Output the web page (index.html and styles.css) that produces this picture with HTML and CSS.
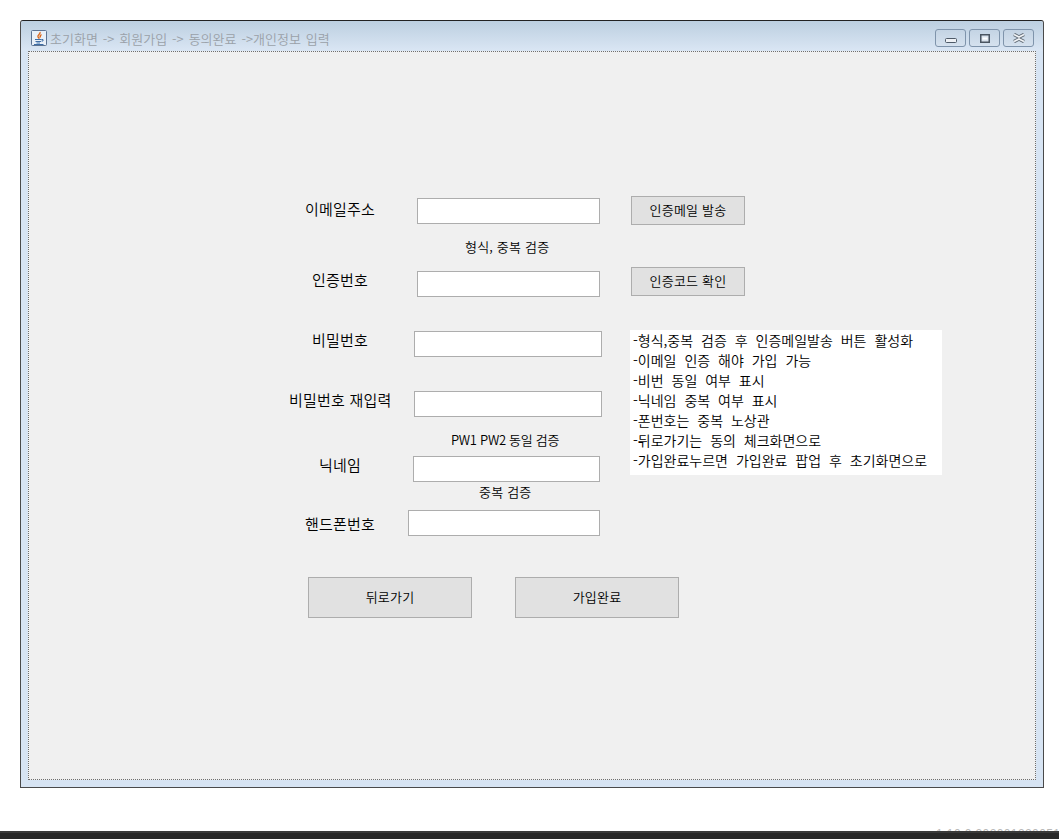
FILE: index.html
```html
<!DOCTYPE html>
<html lang="ko">
<head>
<meta charset="utf-8">
<title>개인정보 입력</title>
<link rel="stylesheet" href="styles.css">
</head>
<body>
<div class="window">
  <div class="titlebar">
    <svg class="app-icon" width="16" height="16" viewBox="0 0 16 16">
      <rect x="0.500" y="0.500" width="15" height="15" rx="1" fill="#e9f0f8" stroke="#5d7392"/>
      <path d="M9 2c1 2-3 3-2 5 .4.8 1 1 1.400 1.600M10.500 4.500c-1.500 1-2 1.500-1 3" fill="none" stroke="#dd6a1e" stroke-width="1.400"/>
      <path d="M4 9.500h6.500M4.500 11.500h5.500M5.500 13h3.500M3 14.500h9.500M10.500 9.500h1.500v1.500h-1.500" fill="none" stroke="#3f6ea6" stroke-width="1"/>
    </svg>
    <span class="title">초기화면 -&gt; 회원가입 -&gt; 동의완료 -&gt;개인정보 입력</span>
    <div class="win-buttons">
      <div class="win-btn wide">
        <svg width="12" height="5" viewBox="0 0 12 5"><rect x="0.500" y="0.500" width="11" height="4" rx="1" fill="#eef1f5" stroke="#4e5a68"/></svg>
      </div>
      <div class="win-btn">
        <svg width="10" height="9" viewBox="0 0 10 9"><rect x="0.750" y="0.750" width="8.500" height="7.500" fill="#d9e2ec" stroke="#4a5561" stroke-width="1.500"/><rect x="2.500" y="3.500" width="5" height="2" fill="#fff"/></svg>
      </div>
      <div class="win-btn">
        <svg width="14" height="10" viewBox="0 0 14 10"><path d="M2 1.500L7 4 12 1.500M2 8.500L7 6l5 2.500" fill="none" stroke="#5e6873" stroke-width="3.600"/><path d="M2 1.500L7 4 12 1.500M2 8.500L7 6l5 2.500" fill="none" stroke="#f0f3f6" stroke-width="1.800"/></svg>
      </div>
    </div>
  </div>
  <div class="content">
    <div class="form">
      <div class="fields">
        <div class="row row-email">
          <label class="label label-email">이메일주소</label>
          <input class="field field-email" type="text">
        </div>
        <p class="hint hint-email">형식, 중복 검증</p>
        <div class="row row-code">
          <label class="label label-code">인증번호</label>
          <input class="field field-code" type="text">
        </div>
        <div class="row row-pw">
          <label class="label label-code">비밀번호</label>
          <input class="field field-pw" type="text">
        </div>
        <div class="row row-pw2">
          <label class="label label-pw2">비밀번호 재입력</label>
          <input class="field field-pw2" type="text">
        </div>
        <p class="hint hint-pw">PW1 PW2 동일 검증</p>
        <div class="row row-nick">
          <label class="label label-nick">닉네임</label>
          <input class="field field-nick" type="text">
        </div>
        <p class="hint hint-nick">중복 검증</p>
        <div class="row row-phone">
          <label class="label label-phone">핸드폰번호</label>
          <input class="field field-phone" type="text">
        </div>
        <div class="actions">
          <button class="btn btn-large" type="button">뒤로가기</button>
          <button class="btn btn-large" type="button">가입완료</button>
        </div>
      </div>
      <div class="side">
        <button class="btn btn-small" type="button">인증메일 발송</button>
        <button class="btn btn-small btn-second" type="button">인증코드 확인</button>
        <div class="notes">
          <div>-형식,중복 검증 후 인증메일발송 버튼 활성화</div>
          <div>-이메일 인증 해야 가입 가능</div>
          <div>-비번 동일 여부 표시</div>
          <div>-닉네임 중복 여부 표시</div>
          <div>-폰번호는 중복 노상관</div>
          <div>-뒤로가기는 동의 체크화면으로</div>
          <div>-가입완료누르면 가입완료 팝업 후 초기화면으로</div>
        </div>
      </div>
    </div>
  </div>
</div>
<div class="bottom">
  <div class="version">1.10.0.202001220051</div>
  <div class="taskbar"></div>
</div>
</body>
</html>
```
FILE: styles.css
```css
* { box-sizing: border-box; }
html, body { margin: 0; height: 100%; }
body {
  width: 1059px;
  height: 839px;
  overflow: hidden;
  background: #fff;
  padding: 20px 15px 0 20px;
  font-family: "Noto Sans CJK KR", "Noto Sans", sans-serif;
  font-weight: 350;
  color: #000;
  position: relative;
}
.window {
  width: 1024px;
  height: 768px;
  border: 1px solid #4a4a4a;
  border-top-color: #222;
  background: #d7e4f3;
  border-radius: 3px 3px 0 0;
  padding: 0 7px 7px;
  display: flex;
  flex-direction: column;
}
.titlebar {
  height: 30px;
  margin: 0 -7px;
  padding: 4px 9px 0 10px;
  flex: none;
  display: flex;
  align-items: center;
  background: linear-gradient(#bccfe0, #dae6f4);
  border-radius: 3px 3px 0 0;
}
.app-icon { flex: none; }
.title {
  margin-left: 3px;
  font-size: 13px;
  color: #9aa1a8;
  word-spacing: 1.300px;
  white-space: nowrap;
}
.win-buttons { margin-left: auto; display: flex; gap: 3px; }
.win-btn {
  width: 31px;
  height: 18px;
  border: 1px solid #7f94ab;
  border-radius: 3px;
  background: linear-gradient(#c4d4e4, #d5e1ee);
  display: flex;
  align-items: center;
  justify-content: center;
}
.win-btn.wide { padding-top: 4px; }
.content {
  flex: 1;
  border: 1px dotted #6f6f6f;
  background: #f0f0f0;
  padding-top: 144px;
}
.form { display: flex; margin-left: 251px; }
.fields { width: 351px; flex: none; }
.row { display: flex; align-items: flex-start; height: 26px; }
.label {
  font-size: 15px;
  line-height: 20px;
  letter-spacing: .2px;
  white-space: nowrap;
}
.field {
  height: 26px;
  border: 1px solid #adadad;
  background: #fff;
  padding: 0;
  outline: none;
  flex: none;
}
.label-email { margin-left: 25px; width: 112px; }
.label-code { margin-left: 32px; width: 100px; }
.label-phone { margin-left: 25px; width: 103px; }
.row-email { margin-top: 2px; }
.row-email .label { margin-top: 1px; }
.field-email { width: 183px; }
.hint {
  margin: 0;
  padding-bottom: 1px;
  font-size: 13px;
  line-height: 16px;
  letter-spacing: .2px;
  white-space: nowrap;
}
.hint-email { margin: 15px 0 0 185px; }
.row-code { margin-top: 15px; }
.row-code .label { margin-top: -1px; }
.field-code { width: 183px; margin-left: 5px; }
.row-pw { margin-top: 34px; }
.row-pw .label { margin-top: -1px; }
.field-pw { width: 188px; margin-left: 2px; }
.row-pw2 { margin-top: 34px; }
.row-pw2 .label { margin-top: -1px; }
.label-pw2 { margin-left: 9px; width: 125px; }
.field-pw2 { width: 188px; }
.hint-pw { margin: 15px 0 0 171px; letter-spacing: -.3px; }
.row-nick { margin-top: 7px; }
.row-nick .label { margin-top: -1px; }
.label-nick { margin-left: 39px; width: 94px; }
.field-nick { width: 187px; }
.hint-nick { margin: 2px 0 0 199px; }
.row-phone { margin-top: 9px; }
.row-phone .label { margin-top: 4px; }
.field-phone { width: 192px; }
.btn {
  border: 1px solid #adadad;
  background: #e1e1e1;
  padding: 0 0 2px;
  color: #000;
  font-family: inherit;
  font-weight: inherit;
  font-size: 13px;
  letter-spacing: .2px;
  white-space: nowrap;
  flex: none;
}
.actions { display: flex; gap: 43px; margin: 41px 0 0 28px; }
.btn-large { width: 164px; height: 41px; }
.side { display: flex; flex-direction: column; align-items: flex-start; }
.btn-small { width: 114px; height: 29px; }
.btn-second { margin-top: 42px; }
.notes {
  margin: 34px 0 0 -1px;
  width: 312px;
  height: 145px;
  background: #fff;
  padding: 0 0 0 3px;
  font-size: 14px;
  line-height: 20px;
  word-spacing: 4px;
  white-space: nowrap;
}
.bottom {
  position: absolute;
  left: 0;
  right: 0;
  bottom: 0;
  height: 12px;
  overflow: hidden;
}
.version {
  position: absolute;
  left: 936px;
  top: 0;
  font-family: "Liberation Sans", sans-serif;
  font-size: 12px;
  line-height: 14px;
  color: #b9b9b9;
  letter-spacing: .4px;
  white-space: nowrap;
}
.taskbar {
  position: absolute;
  left: 0;
  right: 0;
  bottom: 0;
  height: 8px;
  background: #282828;
  border-top: 2px solid #3a3a3a;
}
```
